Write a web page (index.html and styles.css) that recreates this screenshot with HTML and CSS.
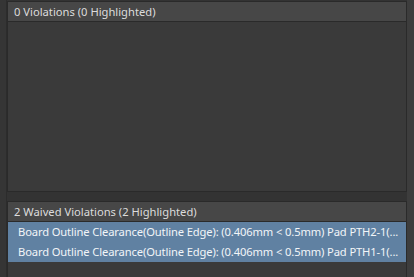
FILE: index.html
```html
<!DOCTYPE html>
<html>
<head>
<meta charset="utf-8">
<link rel="stylesheet" href="styles.css">
</head>
<body>
<div class="frame">
  <div class="left-gutter"></div>
  <div class="stack">
    <section class="panel panel-top">
      <div class="panel-header">0 Violations (0 Highlighted)</div>
      <div class="panel-body"></div>
    </section>
    <section class="panel panel-bottom">
      <div class="panel-header">2 Waived Violations (2 Highlighted)</div>
      <div class="panel-body">
        <div class="row selected">Board Outline Clearance(Outline Edge): (0.406mm &lt; 0.5mm) Pad PTH2-1(...</div>
        <div class="row selected">Board Outline Clearance(Outline Edge): (0.406mm &lt; 0.5mm) Pad PTH1-1(...</div>
      </div>
    </section>
  </div>
  <div class="right-strip"></div>
</div>
</body>
</html>
```

FILE: styles.css
```css
html, body {
  margin: 0;
  padding: 0;
  width: 414px;
  height: 277px;
  overflow: hidden;
  background: #333333;
  font-family: "Segoe UI", "Noto Sans", sans-serif;
  font-size: 11.2px;
}
.frame {
  display: flex;
  height: 277px;
}
.left-gutter {
  width: 6px;
  flex: none;
  border-right: 1px solid #2c2c2c;
  background: #353535;
}
.stack {
  width: 400px;
  flex: none;
  display: flex;
  flex-direction: column;
  gap: 9px;
  padding-top: 1px;
}
.right-strip {
  flex: 1;
  background: #3d3d3d;
}
.panel {
  border: 1px solid #2a2a2a;
  background: #3a3a3a;
  display: flex;
  flex-direction: column;
}
.panel-top {
  height: 189px;
  flex: none;
}
.panel-bottom {
  flex: 1;
  border-bottom: none;
}
.panel-header {
  height: 19px;
  line-height: 19px;
  background: #474747;
  border-bottom: 1px solid #2a2a2a;
  color: #dcdcdc;
  padding-left: 6px;
  white-space: nowrap;
  overflow: hidden;
}
.panel-body {
  flex: 1;
}
.row {
  height: 20px;
  line-height: 20px;
  padding-left: 10px;
  color: #f2f5f8;
  letter-spacing: -0.13px;
  white-space: nowrap;
  overflow: hidden;
}
.row.selected {
  background: #6081a2;
}
```
